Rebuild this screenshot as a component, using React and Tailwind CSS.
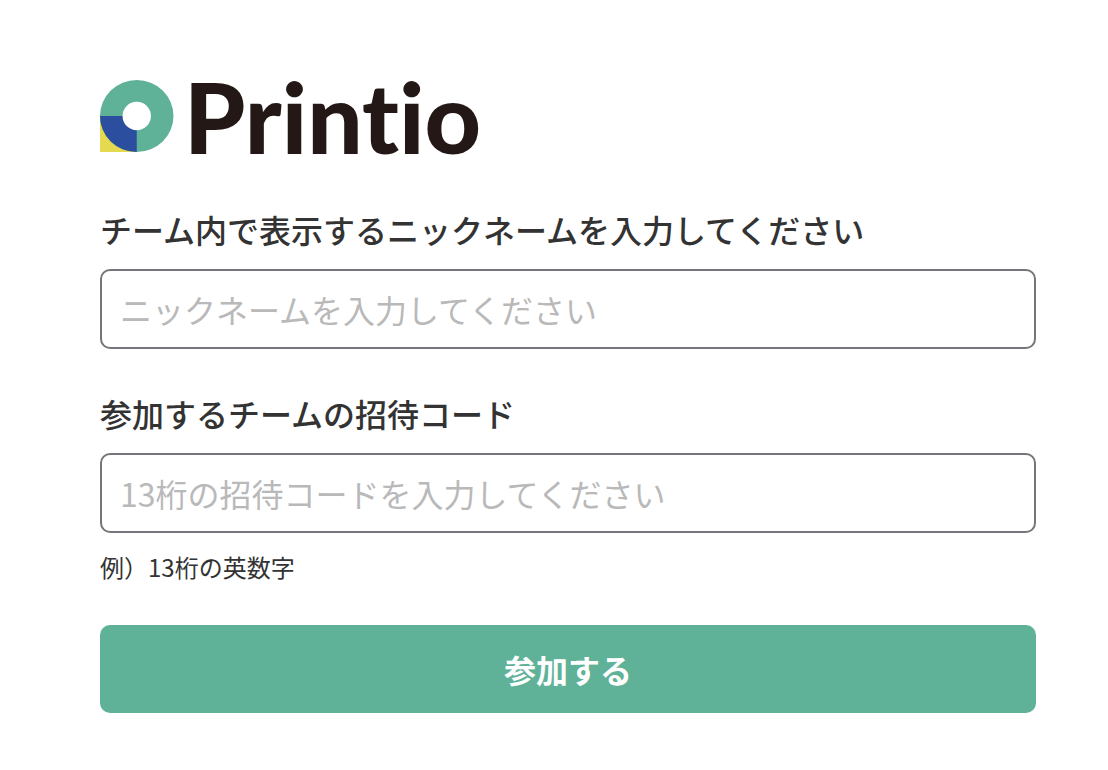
import React, { useState } from "react";

const Logo = () => (
  <div className="flex h-[74px] items-start gap-2.5">
    <svg viewBox="0 0 74 74" className="h-[74px] w-[74px] shrink-0" aria-hidden="true">
      <rect x="0" y="36" width="37" height="36" fill="#e5d94f" />
      <ellipse cx="36.75" cy="36" rx="36.75" ry="36" fill="#5fb298" />
      <path d="M0 36A36.75 36 0 0 0 36.75 72V36Z" fill="#2b4f9e" />
      <circle cx="36.75" cy="36" r="14.2" fill="#fff" />
    </svg>
    <h1 className="font-['Lato',sans-serif] text-[98px] leading-[72px] font-black text-[#231815] [font-variant-ligatures:none]">
      Printio
    </h1>
  </div>
);

const TextField = ({ id, label, hint, ...props }) => (
  <div className="flex flex-col">
    <label htmlFor={id} className="mb-[18px] text-[32px] leading-11 font-medium">
      {label}
    </label>
    <input
      id={id}
      name={id}
      type="text"
      aria-describedby={hint ? `${id}-hint` : undefined}
      className="h-20 w-full rounded-[10px] border-2 border-[#75757c] bg-white px-[18px] text-[32px] placeholder:text-[#b9b9b9] focus:border-[#5fb298] focus:outline-none"
      {...props}
    />
    {hint && (
      <p id={`${id}-hint`} className="mt-4 text-2xl leading-9">
        {hint}
      </p>
    )}
  </div>
);

const App = () => {
  const [formData, setFormData] = useState({ nickname: "", inviteCode: "" });

  const handleChange = (e) => {
    setFormData({ ...formData, [e.target.name]: e.target.value });
  };

  const handleSubmit = (e) => {
    e.preventDefault();
  };

  return (
    <main
      lang="ja"
      className="min-h-screen bg-white pt-20 pr-[72px] pb-14 pl-[100px] font-['Noto_Sans_CJK_JP',sans-serif] text-[#333333]"
    >
      <Logo />
      <form className="mt-[53px] flex flex-col" onSubmit={handleSubmit}>
        <div className="flex flex-col gap-[42px]">
          <TextField
            id="nickname"
            label="チーム内で表示するニックネームを入力してください"
            placeholder="ニックネームを入力してください"
            value={formData.nickname}
            onChange={handleChange}
          />
          <TextField
            id="inviteCode"
            label="参加するチームの招待コード"
            placeholder="13桁の招待コードを入力してください"
            hint="例）13桁の英数字"
            maxLength={13}
            value={formData.inviteCode}
            onChange={handleChange}
          />
        </div>
        <button
          type="submit"
          className="mt-10 h-22 w-full cursor-pointer rounded-[10px] bg-[#5fb298] text-[32px] font-bold text-white hover:bg-[#52a189]"
        >
          参加する
        </button>
      </form>
    </main>
  );
};

export default App;
